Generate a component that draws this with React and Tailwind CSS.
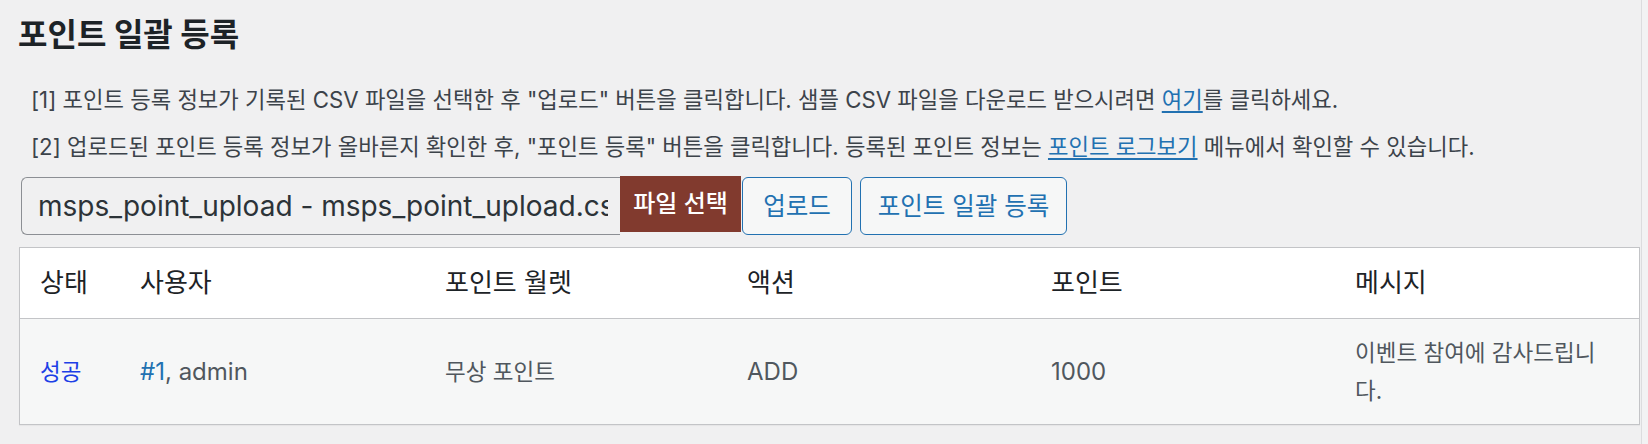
import React from 'react';

export default function App() {
  const columns = ['상태', '사용자', '포인트 월렛', '액션', '포인트', '메시지'];

  return (
    <div className="flex w-[1648px] min-h-[444px] bg-[#f0f0f1] font-[Inter,'Noto_Sans_CJK_KR',sans-serif]">
      <div className="w-[1641px] shrink-0">
        <h1 className="pl-[18px] pt-[13px] text-[32px] leading-[44px] font-bold text-[#1d2327]">
          포인트 일괄 등록
        </h1>

        <p className="mt-[28px] pl-[31px] text-[22.25px] leading-[30px] text-[#3c434a] whitespace-nowrap">
          [1] 포인트 등록 정보가 기록된 CSV 파일을 선택한 후 "업로드" 버튼을 클릭합니다. 샘플 CSV 파일을 다운로드 받으시려면{' '}
          <a className="text-[#2271b1] underline underline-offset-[3px]">여기</a>를 클릭하세요.
        </p>
        <p className="mt-[17px] pl-[31px] text-[22.25px] leading-[30px] text-[#3c434a] whitespace-nowrap">
          [2] 업로드된 포인트 등록 정보가 올바른지 확인한 후, "포인트 등록" 버튼을 클릭합니다. 등록된 포인트 정보는{' '}
          <a className="text-[#2271b1] underline underline-offset-[3px]">포인트 로그보기</a> 메뉴에서 확인할 수 있습니다.
        </p>

        {/* file picker + actions */}
        <div className="mt-[15px] flex items-start pl-[21px]">
          <div className="h-[58px] w-[599px] flex items-center rounded-l-[6px] border border-r-0 border-[#8c8f94] pl-[16px] pr-[12px] text-[28px] text-[#2c3338]">
            <div className="flex-1 overflow-hidden whitespace-nowrap">
              msps_point_upload - msps_point_upload.csv
            </div>
          </div>
          <div className="-mt-px h-[56px] w-[121px] flex items-center justify-center bg-[#813a2e] text-[24px] font-medium text-white">
            파일 선택
          </div>
          <button className="ml-px h-[58px] w-[110px] rounded-[6px] border-[1.5px] border-[#2271b1] bg-[#f6f7f7] text-[24.5px] text-[#2271b1]">
            업로드
          </button>
          <button className="ml-[8px] h-[58px] w-[207px] rounded-[6px] border-[1.5px] border-[#2271b1] bg-[#f6f7f7] text-[24.5px] text-[#2271b1]">
            포인트 일괄 등록
          </button>
        </div>

        {/* result table */}
        <div className="mt-[12px] ml-[19px] w-[1621px] border border-[#c3c4c7] shadow-[0_1px_1px_rgba(0,0,0,0.04)]">
          <div className="grid h-[71px] grid-cols-[100px_305px_302px_304px_304px_1fr] items-center border-b border-[#c3c4c7] bg-white text-[26px] leading-[38px] text-[#1d2327]">
            {columns.map((c) => (
              <div key={c} className="pl-[20px]">{c}</div>
            ))}
          </div>
          <div className="grid h-[105px] grid-cols-[100px_305px_302px_304px_304px_1fr] items-center bg-[#f6f7f7] text-[22.5px] leading-[38px] text-[#50575e]">
            <div className="pl-[20px] text-[#1d3fe6]">성공</div>
            <div className="pl-[20px] text-[24px]">
              <a className="text-[#2271b1]">#1</a>, admin
            </div>
            <div className="pl-[20px]">무상 포인트</div>
            <div className="pl-[20px] text-[24px]">ADD</div>
            <div className="pl-[20px] text-[24px]">1000</div>
            <div className="pl-[20px] pr-[10px]">
              <div className="max-w-[252px]">이벤트 참여에 감사드립니다.</div>
            </div>
          </div>
        </div>
      </div>
      <div className="flex-1 border-l border-[#dcdcde] bg-[#f2f2f3]" />
    </div>
  );
}
